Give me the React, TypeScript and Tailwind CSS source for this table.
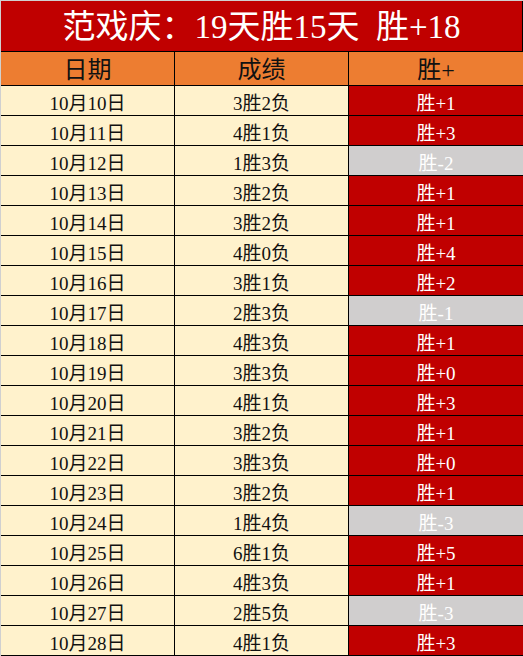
import React from "react";

const rows: [string, string, string, boolean][] = [
  ["10月10日", "3胜2负", "胜+1", true],
  ["10月11日", "4胜1负", "胜+3", true],
  ["10月12日", "1胜3负", "胜-2", false],
  ["10月13日", "3胜2负", "胜+1", true],
  ["10月14日", "3胜2负", "胜+1", true],
  ["10月15日", "4胜0负", "胜+4", true],
  ["10月16日", "3胜1负", "胜+2", true],
  ["10月17日", "2胜3负", "胜-1", false],
  ["10月18日", "4胜3负", "胜+1", true],
  ["10月19日", "3胜3负", "胜+0", true],
  ["10月20日", "4胜1负", "胜+3", true],
  ["10月21日", "3胜2负", "胜+1", true],
  ["10月22日", "3胜3负", "胜+0", true],
  ["10月23日", "3胜2负", "胜+1", true],
  ["10月24日", "1胜4负", "胜-3", false],
  ["10月25日", "6胜1负", "胜+5", true],
  ["10月26日", "4胜3负", "胜+1", true],
  ["10月27日", "2胜5负", "胜-3", false],
  ["10月28日", "4胜1负", "胜+3", true],
];

export default function App() {
  return (
    <div
      className="w-[523px] h-[656px] overflow-hidden bg-white border-t border-l border-[#d0d0d0]"
      style={{ fontFamily: '"Liberation Serif", "Noto Sans CJK SC", serif' }}
    >
      <div className="h-[51px] bg-[#c00000] border-r border-b border-black flex items-center justify-center text-white text-[33px] leading-none pt-[2px]">
        范戏庆：19天胜15天&nbsp;&nbsp;胜+18
      </div>
      <div className="h-[34px] bg-[#ed7d31] border-b border-black flex text-[24px] leading-none text-[#111]">
        <div className="w-[174px] border-r border-black flex items-center justify-center pt-[3px]">日期</div>
        <div className="w-[174px] border-r border-black flex items-center justify-center pt-[3px]">成绩</div>
        <div className="flex-1 flex items-center justify-center pt-[3px]">胜+</div>
      </div>
      {rows.map(([d, r, s, up], i) => (
        <div key={i} className="h-[30px] border-b border-black flex text-[19px] leading-none">
          <div className="w-[174px] bg-[#fff2cc] border-r border-black flex items-center justify-center pt-[6px] text-[#111]">
            {d}
          </div>
          <div className="w-[174px] bg-[#fff2cc] border-r border-black flex items-center justify-center pt-[6px] text-[#111]">
            {r}
          </div>
          <div
            className={
              "flex-1 flex items-center justify-center pt-[6px] text-white " +
              (up ? "bg-[#c00000]" : "bg-[#d0cece]")
            }
          >
            {s}
          </div>
        </div>
      ))}
    </div>
  );
}
